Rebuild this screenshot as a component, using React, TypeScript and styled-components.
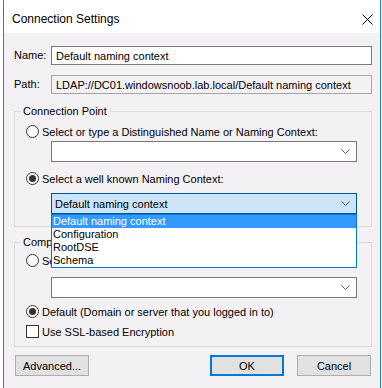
import styled, { createGlobalStyle } from "styled-components";

const GlobalStyle = createGlobalStyle`
  html, body {
    margin: 0;
    padding: 0;
    background: #ffffff;
  }
  body {
    font-family: "Liberation Sans", Arial, sans-serif;
    font-size: 11px;
    color: #000;
  }
`;

const contexts = ["Default naming context", "Configuration", "RootDSE", "Schema"];

function Chevron() {
  return (
    <svg width="9" height="5" viewBox="0 0 9 5">
      <polyline points="0.5,0.5 4.5,4.5 8.5,0.5" fill="none" stroke="#5a5a5a" strokeWidth="1" />
    </svg>
  );
}

function Combo({ value, open }: { value?: string; open?: boolean }) {
  return (
    <ComboWrap>
      <ComboBox $open={open}>
        <span>{value}</span>
        <Chevron />
      </ComboBox>
      {open && (
        <DropList>
          {contexts.map((c, i) => (
            <DropItem key={c} $active={i === 0}>
              {c}
            </DropItem>
          ))}
        </DropList>
      )}
    </ComboWrap>
  );
}

export default function App() {
  return (
    <>
      <GlobalStyle />
      <Window>
        <TitleBar>
          <Title>Connection Settings</Title>
          <svg width="11" height="11" viewBox="0 0 11 11">
            <path d="M0.5 0.5 L10.5 10.5 M10.5 0.5 L0.5 10.5" stroke="#000" strokeWidth="1" />
          </svg>
        </TitleBar>
        <Body>
          <Fields>
            <Label>Name:</Label>
            <TextBox>Default naming context</TextBox>
            <Label>Path:</Label>
            <TextBox $readOnly>LDAP://DC01.windowsnoob.lab.local/Default naming context</TextBox>
          </Fields>

          <Group $top={10}>
            <Legend>Connection Point</Legend>
            <GroupBody $padTop={7} $padBottom={12}>
              <Option>
                <Radio />
                Select or type a Distinguished Name or Naming Context:
              </Option>
              <Indent $top={3}>
                <Combo />
              </Indent>
              <Option $top={10}>
                <Radio $checked />
                Select a well known Naming Context:
              </Option>
              <Indent $top={8}>
                <Combo value="Default naming context" open />
              </Indent>
            </GroupBody>
          </Group>

          <Group $top={8}>
            <Legend>Computer</Legend>
            <GroupBody $padTop={5} $padBottom={8}>
              <Option>
                <Radio />
                Select or type a domain or server:
              </Option>
              <Indent $top={10}>
                <Combo />
              </Indent>
              <Option $top={7}>
                <Radio $checked />
                Default (Domain or server that you logged in to)
              </Option>
              <Option $top={7}>
                <CheckBox />
                Use SSL-based Encryption
              </Option>
            </GroupBody>
          </Group>

          <Footer>
            <Button>Advanced...</Button>
            <ButtonPair>
              <Button $default>OK</Button>
              <Button>Cancel</Button>
            </ButtonPair>
          </Footer>
        </Body>
      </Window>
    </>
  );
}

const Window = styled.div`
  margin-left: 3px;
  width: 378px;
  height: 388px;
  box-sizing: border-box;
  border-left: 1px solid #1883d7;
  border-right: 1px solid #1883d7;
  background: #f4f1f5;
  display: flex;
  flex-direction: column;
  overflow: hidden;
`;

const TitleBar = styled.div`
  height: 33px;
  flex-shrink: 0;
  background: #ffffff;
  display: flex;
  align-items: flex-start;
  justify-content: space-between;
  padding: 12px 7px 0 8px;
  box-sizing: border-box;

  svg {
    margin-top: 2px;
  }
`;

const Title = styled.div`
  font-size: 12px;
  line-height: 14px;
  color: #000;
`;

const Body = styled.div`
  padding: 13px 8px 0 10px;
  display: flex;
  flex-direction: column;
`;

const Fields = styled.div`
  display: grid;
  grid-template-columns: 37px 1fr;
  row-gap: 10px;
  align-items: center;
`;

const Label = styled.div`
  line-height: 13px;
`;

const TextBox = styled.div<{ $readOnly?: boolean }>`
  height: 19px;
  box-sizing: border-box;
  border: 1px solid ${(p) => (p.$readOnly ? "#a6a6a6" : "#7a7a7a")};
  background: ${(p) => (p.$readOnly ? "transparent" : "#ffffff")};
  padding-left: 4px;
  display: flex;
  align-items: center;
  white-space: nowrap;
  overflow: hidden;
`;

const Group = styled.fieldset<{ $top: number }>`
  margin: ${(p) => p.$top}px 0 0 0;
  padding: 0;
  border: 1px solid #dcdcdc;
  min-width: 0;
`;

const Legend = styled.legend`
  margin-left: 6px;
  padding: 0 2px;
  line-height: 14px;
`;

const GroupBody = styled.div<{ $padTop: number; $padBottom: number }>`
  display: flex;
  flex-direction: column;
  padding: ${(p) => p.$padTop}px 14px ${(p) => p.$padBottom}px 11px;
`;

const Option = styled.div<{ $top?: number }>`
  display: flex;
  align-items: center;
  gap: 3px;
  height: 13px;
  white-space: nowrap;
  margin-top: ${(p) => p.$top ?? 0}px;
`;

const Radio = styled.span<{ $checked?: boolean }>`
  width: 13px;
  height: 13px;
  box-sizing: border-box;
  border: 1px solid #333333;
  border-radius: 50%;
  background: #ffffff;
  flex-shrink: 0;
  display: flex;
  align-items: center;
  justify-content: center;

  &::after {
    content: "";
    display: ${(p) => (p.$checked ? "block" : "none")};
    width: 7px;
    height: 7px;
    border-radius: 50%;
    background: #333333;
  }
`;

const CheckBox = styled.span`
  width: 13px;
  height: 13px;
  box-sizing: border-box;
  border: 1px solid #333333;
  background: #ffffff;
  flex-shrink: 0;
`;

const Indent = styled.div<{ $top?: number }>`
  margin-left: 25px;
  margin-top: ${(p) => p.$top ?? 0}px;
`;

const ComboWrap = styled.div`
  position: relative;
`;

const ComboBox = styled.div<{ $open?: boolean }>`
  height: 21px;
  box-sizing: border-box;
  border: 1px solid ${(p) => (p.$open ? "#005499" : "#7a7a7a")};
  background: ${(p) => (p.$open ? "#cce4f7" : "#ffffff")};
  display: flex;
  align-items: center;
  justify-content: space-between;
  padding: 0 6px 0 3px;
`;

const DropList = styled.div`
  position: absolute;
  top: 100%;
  left: 0;
  right: 0;
  z-index: 2;
  border: 1px solid #0078d7;
  background: #ffffff;
`;

const DropItem = styled.div<{ $active?: boolean }>`
  height: 13px;
  line-height: 13px;
  padding-left: 1px;
  background: ${(p) => (p.$active ? "#3399ff" : "transparent")};
  color: ${(p) => (p.$active ? "#ffffff" : "#000000")};
  white-space: nowrap;
`;

const Footer = styled.div`
  display: flex;
  justify-content: space-between;
  margin-top: 8px;
  padding: 0 1px;
`;

const ButtonPair = styled.div`
  display: flex;
  gap: 13px;
`;

const Button = styled.div<{ $default?: boolean }>`
  width: 74px;
  height: 21px;
  box-sizing: border-box;
  border: ${(p) => (p.$default ? "2px solid #0078d7" : "1px solid #adadad")};
  background: #e1e1e1;
  display: flex;
  align-items: center;
  justify-content: center;
`;
